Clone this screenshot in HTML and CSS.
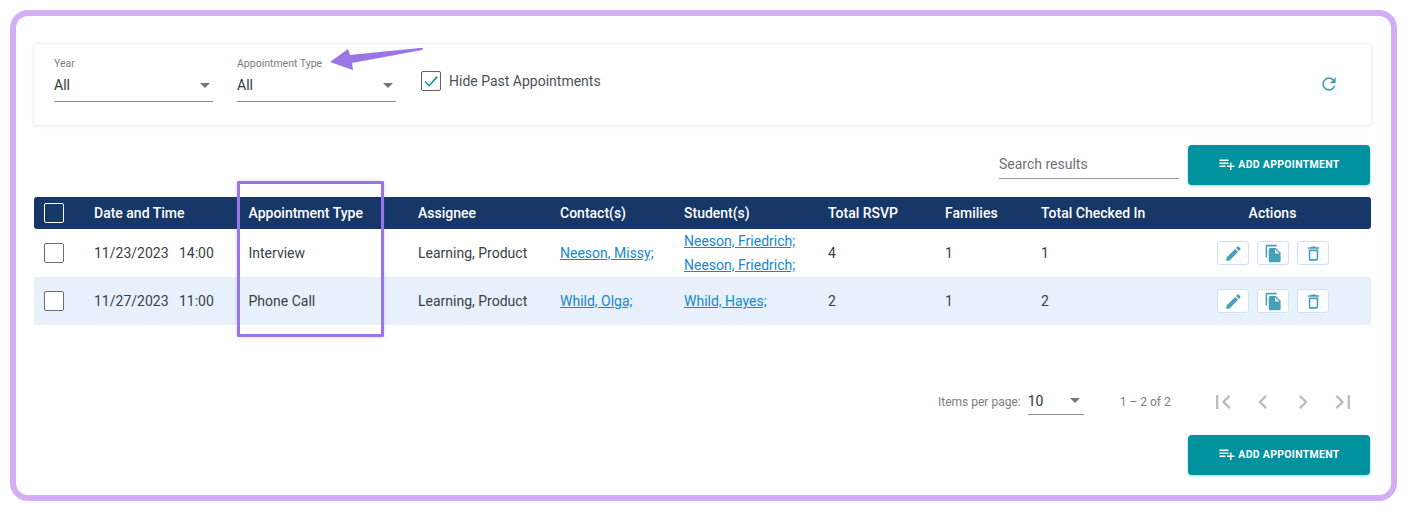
FILE: index.html
```html
<!DOCTYPE html>
<html lang="en">
<head>
<meta charset="utf-8">
<title>Appointments</title>
<link rel="stylesheet" href="styles.css">
</head>
<body>
<svg width="0" height="0" class="defs">
  <symbol id="i-edit" viewBox="0 0 24 24"><path d="M3 17.25V21h3.75L17.81 9.94l-3.75-3.75L3 17.25zM20.71 7.04c.39-.39.39-1.02 0-1.41l-2.34-2.34c-.39-.39-1.02-.39-1.41 0l-1.83 1.83 3.75 3.75 1.83-1.83z"/></symbol>
  <symbol id="i-copy" viewBox="0 0 24 24"><path d="M16 1H4c-1.1 0-2 .9-2 2v14h2V3h12V1zm-1 4l6 6v10c0 1.1-.9 2-2 2H7.99C6.89 23 6 22.1 6 21l.01-14c0-1.1.89-2 1.99-2h7zm-1 7h5.5L14 6.5V12z"/></symbol>
  <symbol id="i-delete" viewBox="0 0 24 24"><path d="M6 19c0 1.1.9 2 2 2h8c1.1 0 2-.9 2-2V7H6v12zM8 9h8v10H8V9zm7.5-5l-1-1h-5l-1 1H5v2h14V4z"/></symbol>
  <symbol id="i-plus" viewBox="0 0 24 24"><path d="M14 10H2v2h12v-2zm0-4H2v2h12V6zm4 8v-4h-2v4h-4v2h4v4h2v-4h4v-2h-4zM2 16h8v-2H2v2z"/></symbol>
</svg>
<main class="frame">
  <section class="filters">
    <div class="field">
      <span class="field-label">Year</span>
      <div class="field-value"><span>All</span><i class="caret"></i></div>
    </div>
    <div class="field">
      <span class="field-label">Appointment Type</span>
      <div class="field-value"><span>All</span><i class="caret"></i></div>
    </div>
    <label class="hide-past">
      <span class="check-on"><svg viewBox="0 0 20 20" width="20" height="20"><path d="M4 10.5l4.2 4.2L16.2 5.6" fill="none" stroke="#10939f" stroke-width="1.6"/></svg></span>
      <span class="hide-text">Hide Past Appointments</span>
    </label>
    <svg class="refresh" viewBox="0 0 24 24" width="20" height="20"><path d="M17.65 6.35C16.2 4.9 14.21 4 12 4c-4.42 0-7.99 3.58-7.99 8s3.57 8 7.99 8c3.73 0 6.84-2.55 7.73-6h-2.08c-.82 2.33-3.04 4-5.65 4-3.31 0-6-2.69-6-6s2.69-6 6-6c1.66 0 3.14.69 4.22 1.78L13 11h7V4l-2.35 2.35z"/></svg>
  </section>

  <div class="toolbar">
    <div class="search">Search results</div>
    <button class="add-btn"><svg viewBox="0 0 24 24" width="18" height="18"><use href="#i-plus"/></svg>ADD APPOINTMENT</button>
  </div>

  <table class="grid">
    <colgroup>
      <col class="c1"><col class="c2"><col class="c3"><col class="c4"><col class="c5"><col class="c6"><col class="c7"><col class="c8"><col class="c9"><col class="c10">
    </colgroup>
    <thead>
      <tr>
        <th><span class="box box-head"></span></th>
        <th>Date and Time</th>
        <th>Appointment Type</th>
        <th>Assignee</th>
        <th>Contact(s)</th>
        <th>Student(s)</th>
        <th>Total RSVP</th>
        <th>Families</th>
        <th>Total Checked In</th>
        <th class="center">Actions</th>
      </tr>
    </thead>
    <tbody>
      <tr>
        <td><span class="box"></span></td>
        <td>11/23/2023 &nbsp; 14:00</td>
        <td>Interview</td>
        <td>Learning, Product</td>
        <td><a href="#">Neeson, Missy;</a></td>
        <td class="stack"><a href="#">Neeson, Friedrich;</a><a href="#">Neeson, Friedrich;</a></td>
        <td>4</td>
        <td>1</td>
        <td>1</td>
        <td><div class="actions">
          <button class="act"><svg viewBox="0 0 24 24"><use href="#i-edit"/></svg></button>
          <button class="act"><svg viewBox="0 0 24 24"><use href="#i-copy"/></svg></button>
          <button class="act"><svg viewBox="0 0 24 24"><use href="#i-delete"/></svg></button>
        </div></td>
      </tr>
      <tr class="alt">
        <td><span class="box"></span></td>
        <td>11/27/2023 &nbsp; 11:00</td>
        <td>Phone Call</td>
        <td>Learning, Product</td>
        <td><a href="#">Whild, Olga;</a></td>
        <td><a href="#">Whild, Hayes;</a></td>
        <td>2</td>
        <td>1</td>
        <td>2</td>
        <td><div class="actions">
          <button class="act"><svg viewBox="0 0 24 24"><use href="#i-edit"/></svg></button>
          <button class="act"><svg viewBox="0 0 24 24"><use href="#i-copy"/></svg></button>
          <button class="act"><svg viewBox="0 0 24 24"><use href="#i-delete"/></svg></button>
        </div></td>
      </tr>
    </tbody>
  </table>

  <div class="pager">
    <span class="pager-label">Items per page:</span>
    <div class="pager-select"><span>10</span><i class="caret"></i></div>
    <span class="pager-range">1 – 2 of 2</span>
    <div class="pager-icons">
      <svg viewBox="0 0 24 24"><path d="M18.41 16.59L13.82 12l4.59-4.59L17 6l-6 6 6 6zM6 6h2v12H6z"/></svg>
      <svg viewBox="0 0 24 24"><path d="M15.41 7.41L14 6l-6 6 6 6 1.41-1.41L10.83 12z"/></svg>
      <svg viewBox="0 0 24 24"><path d="M10 6L8.59 7.41 13.17 12l-4.58 4.59L10 18l6-6z"/></svg>
      <svg viewBox="0 0 24 24"><path d="M5.59 7.41L10.18 12 5.59 16.59 7 18l6-6-6-6zM16 6h2v12h-2z"/></svg>
    </div>
  </div>

  <div class="footer-bar">
    <button class="add-btn"><svg viewBox="0 0 24 24" width="18" height="18"><use href="#i-plus"/></svg>ADD APPOINTMENT</button>
  </div>

  <svg class="arrow" viewBox="0 0 100 30" width="100" height="30"><path d="M92 4.700Q94 5.600 92 7L22 20 23 27 0 19 18 6 20 12Z" fill="#9a75e6"/></svg>
  <div class="highlight"></div>
</main>
</body>
</html>
```

FILE: styles.css
```css
* { box-sizing: border-box; }
html, body { margin: 0; background: #fff; }
body {
  padding: 10px;
  width: 1407px;
  height: 511px;
  overflow: hidden;
  font-family: Roboto, "Liberation Sans", sans-serif;
  font-size: 14px;
  color: #3a3f45;
}
.defs { position: absolute; }

.frame {
  position: relative;
  width: 1387px;
  height: 491px;
  border: 6px solid #d4aef5;
  border-radius: 18px;
  padding: 27px 19px 0 17px;
  background: #fff;
}

.filters {
  display: flex;
  align-items: flex-start;
  height: 83px;
  padding: 0 32px 0 20px;
  background: #fff;
  border: 1px solid #f1f1f3;
  border-radius: 4px;
  box-shadow: 0 1px 3px rgba(0, 0, 0, .06);
}
.field { width: 159px; margin-right: 24px; padding-top: 14px; }
.field-label { display: block; font-size: 10.5px; line-height: 12px; color: #7b7e82; }
.field-value {
  display: flex;
  align-items: center;
  justify-content: space-between;
  height: 32px;
  padding: 5px 3px 6px 0;
  border-bottom: 1px solid #8d8d8d;
  font-size: 14px;
  color: #33383e;
}
.caret {
  width: 0;
  height: 0;
  border-left: 5px solid transparent;
  border-right: 5px solid transparent;
  border-top: 5px solid #757575;
}
.hide-past {
  display: flex;
  align-items: center;
  gap: 8px;
  margin-top: 27px;
  margin-left: 1px;
  color: #4b5058;
}
.hide-text { padding-bottom: 1px; }
.check-on {
  display: block;
  width: 20px;
  height: 20px;
  border: 1px solid #5f6368;
  border-radius: 2px;
  position: relative;
}
.check-on svg { display: block; margin: -1px; }
.refresh { margin: 30px 0 0 auto; fill: #46a0b8; }

.toolbar {
  display: flex;
  justify-content: flex-end;
  align-items: flex-end;
  gap: 9px;
  margin-top: 19px;
  padding-right: 2px;
}
.search {
  width: 180px;
  height: 29px;
  padding-top: 6px;
  border-bottom: 1px solid #9a9a9a;
  color: #6e7277;
  margin-bottom: 6px;
}
.add-btn {
  display: flex;
  align-items: center;
  justify-content: center;
  gap: 2px;
  width: 182px;
  height: 40px;
  padding: 0 0 2px;
  border: 0;
  border-radius: 4px;
  background: #00929f;
  color: #fff;
  font: 700 10.500px Roboto, "Liberation Sans", sans-serif;
  letter-spacing: .3px;
  box-shadow: 0 1px 3px rgba(0, 110, 120, .35);
}
.add-btn svg { fill: #fff; }

.grid {
  width: 1337px;
  margin: 12px 0 0 1px;
  table-layout: fixed;
  border-collapse: separate;
  border-spacing: 0;
}
.c1 { width: 50px; }
.c2 { width: 154.500px; }
.c3 { width: 169.500px; }
.c4 { width: 142px; }
.c5 { width: 124px; }
.c6 { width: 144px; }
.c7 { width: 117px; }
.c8 { width: 96px; }
.c9 { width: 143px; }
.c10 { width: 197px; }
.grid th {
  height: 32px;
  padding: 0 10px;
  background: #163767;
  color: #fff;
  font-weight: 500;
  text-align: left;
  font-size: 14px;
}
.grid th:first-child { border-radius: 3px 0 0 3px; }
.grid th:last-child { border-radius: 0 3px 3px 0; }
.grid th.center { text-align: center; }
.grid td {
  height: 48px;
  padding: 0 10px;
  color: #3a3f45;
  vertical-align: middle;
}
.grid td.stack a { display: block; line-height: 24px; }
.alt td { background: #e8f1fb; }
.grid a { color: #1489cf; text-decoration: underline; }
.box {
  display: block;
  width: 20px;
  height: 20px;
  border: 1px solid #6c6f73;
  border-radius: 2px;
  background: #fff;
}
.box-head { background: transparent; border-color: #fff; }
.actions { display: flex; justify-content: flex-end; gap: 8px; padding-right: 32px; }
.act {
  display: flex;
  align-items: center;
  justify-content: center;
  width: 32px;
  height: 24px;
  padding: 0;
  background: #fff;
  border: 1px solid #cfe2f3;
  border-radius: 3px;
}
.act svg { width: 19px; height: 19px; fill: #46a0b8; }

.pager {
  display: flex;
  align-items: center;
  height: 40px;
  margin-top: 57px;
  padding-left: 905px;
  color: #7b7e82;
  font-size: 12px;
}
.pager-select {
  display: flex;
  align-items: center;
  justify-content: space-between;
  width: 56px;
  height: 27px;
  margin: 0 0 2px 7px;
  padding: 0 4px 0 0;
  border-bottom: 1px solid #8d8d8d;
  font-size: 14px;
  color: #33383e;
}
.pager-range { margin-left: 36px; width: 75px; }
.pager-icons { display: flex; gap: 12px; margin-left: 14px; }
.pager-icons svg { width: 28px; height: 28px; fill: #bdbdbd; display: block; }

.footer-bar {
  display: flex;
  justify-content: flex-end;
  margin-top: 13px;
  padding-right: 2px;
}

.arrow { position: absolute; left: 314px; top: 27px; }
.highlight {
  position: absolute;
  left: 221px;
  top: 165px;
  width: 147px;
  height: 156px;
  border: 3px solid #9a75e6;
  border-radius: 1px;
  box-shadow: 0 0 4px rgba(120, 90, 220, .25);
}
```
